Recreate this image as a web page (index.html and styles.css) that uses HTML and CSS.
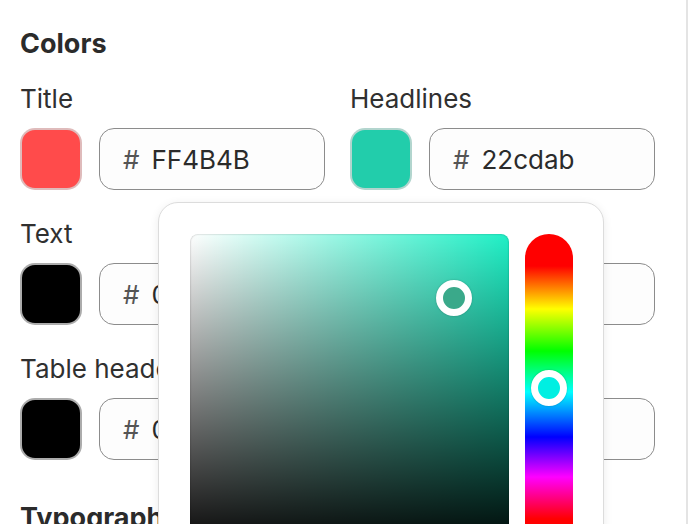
FILE: index.html
```html
<!DOCTYPE html>
<html lang="en">
<head>
<meta charset="utf-8">
<title>Colors</title>
<link rel="stylesheet" href="styles.css">
</head>
<body>
<div class="panel">
  <h2 class="section-title">Colors</h2>
  <div class="fields">
    <div class="field">
      <div class="label">Title</div>
      <div class="control">
        <div class="swatch" style="background:#FF4B4B"></div>
        <div class="hex"><span class="hash">#</span><span class="value">FF4B4B</span></div>
      </div>
    </div>
    <div class="field">
      <div class="label">Headlines</div>
      <div class="control">
        <div class="swatch" style="background:#22cdab"></div>
        <div class="hex"><span class="hash">#</span><span class="value">22cdab</span></div>
      </div>
    </div>
    <div class="field">
      <div class="label">Text</div>
      <div class="control">
        <div class="swatch" style="background:#000000"></div>
        <div class="hex"><span class="hash">#</span><span class="value">000000</span></div>
      </div>
    </div>
    <div class="field">
      <div class="label">Links</div>
      <div class="control">
        <div class="swatch" style="background:#0000ee"></div>
        <div class="hex"><span class="hash">#</span><span class="value">0000ee</span></div>
      </div>
    </div>
    <div class="field">
      <div class="label">Table header</div>
      <div class="control">
        <div class="swatch" style="background:#000000"></div>
        <div class="hex"><span class="hash">#</span><span class="value">000000</span></div>
      </div>
    </div>
    <div class="field">
      <div class="label">Table text</div>
      <div class="control">
        <div class="swatch" style="background:#000000"></div>
        <div class="hex"><span class="hash">#</span><span class="value">000000</span></div>
      </div>
    </div>
  </div>
  <h2 class="section-title typo">Typography</h2>

  <div class="picker">
    <div class="saturation">
      <div class="handle sat-handle"></div>
    </div>
    <div class="hue">
      <div class="handle hue-handle"></div>
    </div>
  </div>
</div>
</body>
</html>
```

FILE: styles.css
```css
html, body {
  margin: 0;
  padding: 0;
  background: #ffffff;
}

body {
  font-family: Inter, "Noto Sans", "Liberation Sans", sans-serif;
  color: #2b2b2b;
  overflow: hidden;
}

.panel {
  position: relative;
  box-sizing: border-box;
  width: 688px;
  height: 524px;
  padding: 28px 31px 0 20px;
  border-right: 2px solid #e4e4e4;
  overflow: hidden;
}

.section-title {
  margin: 0;
  font-size: 27px;
  line-height: 32px;
  font-weight: 700;
  color: #2b2b2b;
}

.fields {
  margin-top: 24px;
  display: grid;
  grid-template-columns: 1fr 1fr;
  column-gap: 25px;
  row-gap: 29px;
}

.label {
  font-size: 26px;
  line-height: 30px;
  color: #303030;
  white-space: nowrap;
}

.control {
  margin-top: 14px;
  display: flex;
  gap: 17px;
}

.swatch {
  box-sizing: border-box;
  width: 62px;
  height: 62px;
  flex: none;
  border-radius: 15px;
  border: 2px solid rgba(215, 215, 215, 0.8);
}

.hex {
  box-sizing: border-box;
  flex: 1;
  height: 62px;
  border: 1px solid #8c8c8c;
  border-radius: 15px;
  background: #fdfdfd;
  display: flex;
  align-items: center;
  padding-left: 23px;
  font-size: 26px;
}

.hash {
  color: #555555;
  margin-right: 12px;
}

.value {
  color: #2b2b2b;
}

.typo {
  margin-top: 42px;
}

.picker {
  position: absolute;
  left: 158px;
  top: 202px;
  box-sizing: border-box;
  width: 446px;
  height: 420px;
  padding: 31px 31px;
  background: #ffffff;
  border: 1px solid #dcdcdc;
  border-radius: 20px;
  box-shadow: 0 2px 10px rgba(0, 0, 0, 0.08);
  display: flex;
  gap: 16px;
}

.saturation {
  position: relative;
  width: 319px;
  height: 320px;
  flex: none;
  border-radius: 8px;
  background:
    linear-gradient(to top, #000000, rgba(0, 0, 0, 0)),
    linear-gradient(to right, #ffffff, rgba(255, 255, 255, 0)),
    #1ff0c6;
  box-shadow: inset 0 0 2px rgba(0, 0, 0, 0.35);
}

.hue {
  position: relative;
  width: 48px;
  height: 320px;
  flex: none;
  border-radius: 24px 24px 0 0;
  background: linear-gradient(to bottom,
    #ff0000 0px,
    #ff0000 32px,
    #ffff00 75px,
    #00ff00 117px,
    #00ffff 158px,
    #0000ff 203px,
    #ff00ff 243px,
    #ff0000 285px,
    #ff0000 320px);
}

.handle {
  position: absolute;
  box-sizing: border-box;
  width: 36px;
  height: 36px;
  border-radius: 50%;
  border: 7px solid #ffffff;
  box-shadow: 0 0 2px rgba(0, 0, 0, 0.25);
}

.sat-handle {
  left: 246px;
  top: 46px;
  background: #3aa98a;
}

.hue-handle {
  left: 6px;
  top: 136px;
  background: #00efe2;
}
```
